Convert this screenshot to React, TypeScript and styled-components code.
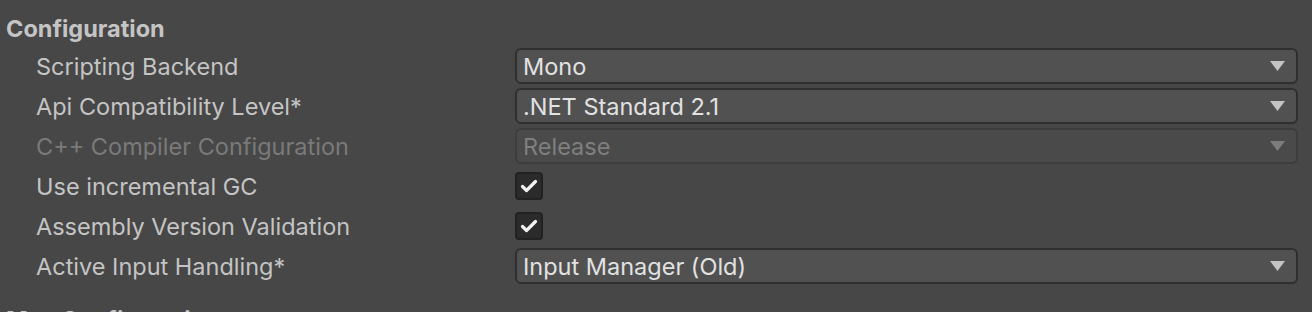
import React from 'react';
import styled, { createGlobalStyle } from 'styled-components';

const GlobalStyle = createGlobalStyle`
  html, body {
    margin: 0;
    padding: 0;
    background: #474747;
  }
  body {
    font-family: Inter, "Noto Sans", sans-serif;
    overflow: hidden;
  }
`;

const Page = styled.div`
  width: 1312px;
  height: 312px;
  overflow: hidden;
  padding: 11px 14px 0 6px;
  box-sizing: border-box;
  background: #474747;
  color: #c4c4c4;
`;

const Heading = styled.div`
  height: 35px;
  display: flex;
  align-items: center;
  font-size: 23.5px;
  font-weight: 700;
  color: #c4c4c4;
`;

const Rows = styled.div`
  display: flex;
  flex-direction: column;
  margin-bottom: 16px;
`;

const Row = styled.div`
  display: grid;
  grid-template-columns: 509px 1fr;
  align-items: center;
  height: 40px;
`;

const Label = styled.div<{ $disabled?: boolean }>`
  padding-left: 30px;
  font-size: 23.5px;
  color: ${p => (p.$disabled ? '#7a7a7a' : '#c4c4c4')};
  white-space: nowrap;
`;

const Dropdown = styled.div<{ $disabled?: boolean }>`
  height: 36px;
  box-sizing: border-box;
  display: flex;
  align-items: center;
  justify-content: space-between;
  padding: 0 11px 0 6px;
  border-radius: 6px;
  border: 2px solid ${p => (p.$disabled ? '#3d3d3d' : '#2f2f2f')};
  background: ${p => (p.$disabled ? '#4a4a4a' : '#515151')};
  color: ${p => (p.$disabled ? '#7f7f7f' : '#e2e2e2')};
  font-size: 23.5px;
`;

const Arrow = styled.svg<{ $disabled?: boolean }>`
  width: 15px;
  height: 10px;
  fill: ${p => (p.$disabled ? '#7d7d7d' : '#c4c4c4')};
`;

const Checkbox = styled.div`
  width: 28px;
  height: 28px;
  box-sizing: border-box;
  border-radius: 4px;
  border: 2px solid #222222;
  background: #2b2b2b;
  display: flex;
  align-items: center;
  justify-content: center;
`;

const Check = styled.svg`
  width: 18px;
  height: 14px;
  fill: none;
  stroke: #f0f0f0;
  stroke-width: 3.2;
  stroke-linecap: round;
  stroke-linejoin: round;
`;

type Field =
  | { label: string; kind: 'select'; value: string; disabled?: boolean }
  | { label: string; kind: 'check' };

const fields: Field[] = [
  { label: 'Scripting Backend', kind: 'select', value: 'Mono' },
  { label: 'Api Compatibility Level*', kind: 'select', value: '.NET Standard 2.1' },
  { label: 'C++ Compiler Configuration', kind: 'select', value: 'Release', disabled: true },
  { label: 'Use incremental GC', kind: 'check' },
  { label: 'Assembly Version Validation', kind: 'check' },
  { label: 'Active Input Handling*', kind: 'select', value: 'Input Manager (Old)' },
];

const Select = ({ value, disabled }: { value: string; disabled?: boolean }) => (
  <Dropdown $disabled={disabled}>
    <span>{value}</span>
    <Arrow $disabled={disabled} viewBox="0 0 15 10">
      <polygon points="0,0 15,0 7.5,10" />
    </Arrow>
  </Dropdown>
);

const Toggle = () => (
  <div>
    <Checkbox>
      <Check viewBox="0 0 18 14">
        <polyline points="2.5,7.5 6.5,11.5 15.5,2.5" />
      </Check>
    </Checkbox>
  </div>
);

export default function App() {
  return (
    <Page>
      <GlobalStyle />
      <Heading>Configuration</Heading>
      <Rows>
        {fields.map(f => (
          <Row key={f.label}>
            <Label $disabled={f.kind === 'select' && f.disabled}>{f.label}</Label>
            {f.kind === 'select' ? <Select value={f.value} disabled={f.disabled} /> : <Toggle />}
          </Row>
        ))}
      </Rows>
      <Heading>Mac Configuration</Heading>
    </Page>
  );
}
